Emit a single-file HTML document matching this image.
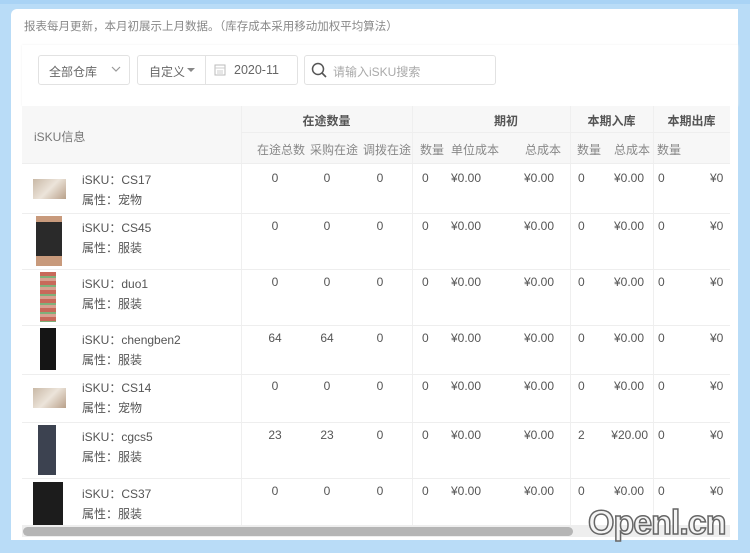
<!DOCTYPE html>
<html><head><meta charset="utf-8"><style>
*{margin:0;padding:0;box-sizing:border-box}
body{width:750px;height:553px;background:#b9dcf7;font-family:"Liberation Sans","Noto Sans CJK SC",sans-serif;font-size:12px;color:#555;position:relative;overflow:hidden}
.a{position:absolute;white-space:nowrap}
#panel{position:absolute;left:11px;top:9px;width:727px;height:531px;background:#fff;border-radius:6px 0 0 0;overflow:hidden}
.box{position:absolute;border:1px solid #e2e2e2;border-radius:3px;background:#fff}
.c{text-align:center}
.r{text-align:right}
.vl{position:absolute;width:1px;background:#efefef}
.hl{position:absolute;height:1px;background:#eeeeee}
</style></head><body>
<div id="panel"></div>
<div class="a" style="left:0;top:0;width:750px;height:4px;background:#a9d3f5"></div>
<div class="a" style="left:24px;top:18px;font-size:11.5px;color:#888">报表每月更新，本月初展示上月数据。（库存成本采用移动加权平均算法）</div>
<div class="a" style="left:22px;top:45px;width:716px;height:61px;background:#fff;box-shadow:0 0 2px #eee"></div>
<div class="box" style="left:38px;top:55px;width:92px;height:30px"></div>
<div class="a" style="left:49px;top:63px;color:#666">全部仓库</div>
<svg class="a" style="left:111px;top:66px" width="10" height="7"><path d="M1 1 L5 5 L9 1" fill="none" stroke="#999" stroke-width="1.2"/></svg>
<div class="box" style="left:137px;top:55px;width:161px;height:30px"></div>
<div class="a" style="left:205px;top:56px;width:1px;height:28px;background:#e2e2e2"></div>
<div class="a" style="left:149px;top:63px;color:#666">自定义</div>
<svg class="a" style="left:187px;top:68px" width="8" height="5"><path d="M0 0 L8 0 L4 4Z" fill="#888"/></svg>
<svg class="a" style="left:214px;top:63px" width="12" height="13"><rect x="1" y="2" width="10" height="10" fill="none" stroke="#bbb"/><path d="M1 5H11M3 8H9M3 10H9" stroke="#ccc"/></svg>
<div class="a" style="left:234px;top:63px;color:#666;font-size:12.5px">2020-11</div>
<div class="box" style="left:304px;top:55px;width:192px;height:30px"></div>
<svg class="a" style="left:311px;top:62px" width="16" height="16"><circle cx="7" cy="7" r="5.5" fill="none" stroke="#555" stroke-width="1.5"/><path d="M11 11 L15 15" stroke="#555" stroke-width="1.6"/></svg>
<div class="a" style="left:333px;top:63px;color:#aaa">请输入iSKU搜索</div>
<!-- table header -->
<div class="a" style="left:22px;top:106px;width:708px;height:57px;background:#f7f7f7"></div>
<div class="a" style="left:730px;top:106px;width:8px;height:419px;background:#fff"></div>
<div class="a" style="left:34px;top:128px;color:#777">iSKU信息</div>
<div class="a c" style="left:241px;top:112px;width:171px;font-weight:bold;color:#555">在途数量</div>
<div class="a c" style="left:412px;top:112px;width:158px;font-weight:bold;color:#555;padding-left:30px">期初</div>
<div class="a c" style="left:570px;top:112px;width:83px;font-weight:bold;color:#555">本期入库</div>
<div class="a c" style="left:653px;top:112px;width:77px;font-weight:bold;color:#555">本期出库</div>
<div class="a" style="left:257px;top:141px;color:#888">在途总数</div>
<div class="a" style="left:310px;top:141px;color:#888">采购在途</div>
<div class="a" style="left:363px;top:141px;color:#888">调拨在途</div>
<div class="a" style="left:420px;top:141px;color:#888">数量</div>
<div class="a" style="left:451px;top:141px;color:#888">单位成本</div>
<div class="a" style="left:525px;top:141px;color:#888">总成本</div>
<div class="a" style="left:577px;top:141px;color:#888">数量</div>
<div class="a" style="left:614px;top:141px;color:#888">总成本</div>
<div class="a" style="left:657px;top:141px;color:#888">数量</div>
<div class="vl" style="left:241px;top:106px;height:419px"></div>
<div class="vl" style="left:412px;top:106px;height:419px"></div>
<div class="vl" style="left:570px;top:106px;height:419px"></div>
<div class="vl" style="left:653px;top:106px;height:419px"></div>
<div class="hl" style="left:241px;top:132px;width:489px"></div>
<div class="hl" style="left:22px;top:163px;width:708px"></div>
<div class="hl" style="left:22px;top:213px;width:708px"></div>
<div class="hl" style="left:22px;top:269px;width:708px"></div>
<div class="hl" style="left:22px;top:325px;width:708px"></div>
<div class="hl" style="left:22px;top:374px;width:708px"></div>
<div class="hl" style="left:22px;top:422px;width:708px"></div>
<div class="hl" style="left:22px;top:478px;width:708px"></div>

<!-- images -->
<div class="a" style="left:33px;top:179px;width:33px;height:20px;background:linear-gradient(135deg,#c9b9a6,#ece4da 50%,#b8a089)"></div>
<div class="a" style="left:36px;top:216px;width:26px;height:50px;background:linear-gradient(#c89a7c 0 12%,#2a2a2a 12% 80%,#c89a7c 80%)"></div>
<div class="a" style="left:40px;top:272px;width:16px;height:50px;background:repeating-linear-gradient(#c8695a 0 4px,#7fb07a 4px 6px,#d8a090 6px 9px)"></div>
<div class="a" style="left:40px;top:328px;width:16px;height:42px;background:#151515"></div>
<div class="a" style="left:33px;top:388px;width:33px;height:20px;background:linear-gradient(135deg,#c9b9a6,#ece4da 50%,#b8a089)"></div>
<div class="a" style="left:38px;top:425px;width:18px;height:50px;background:#3c4250"></div>
<div class="a" style="left:33px;top:482px;width:30px;height:43px;background:#1c1c1c"></div>

<!-- rows -->
<div class="a" style="left:82px;top:170px;line-height:20px">iSKU：CS17<br>属性：宠物</div>
<div class="a" style="left:82px;top:218px;line-height:20px">iSKU：CS45<br>属性：服装</div>
<div class="a" style="left:82px;top:274px;line-height:20px">iSKU：duo1<br>属性：服装</div>
<div class="a" style="left:82px;top:330px;line-height:20px">iSKU：chengben2<br>属性：服装</div>
<div class="a" style="left:82px;top:378px;line-height:20px">iSKU：CS14<br>属性：宠物</div>
<div class="a" style="left:82px;top:427px;line-height:20px">iSKU：cgcs5<br>属性：服装</div>
<div class="a" style="left:82px;top:484px;line-height:20px">iSKU：CS37<br>属性：服装</div>

<!-- numbers -->
<div class="a" style="left:0;top:0">
<div class="a c" style="left:255px;top:171px;width:40px">0</div><div class="a c" style="left:307px;top:171px;width:40px">0</div><div class="a c" style="left:360px;top:171px;width:40px">0</div><div class="a" style="left:422px;top:171px">0</div><div class="a" style="left:451px;top:171px">¥0.00</div><div class="a r" style="left:504px;top:171px;width:50px">¥0.00</div><div class="a" style="left:578px;top:171px">0</div><div class="a r" style="left:594px;top:171px;width:50px">¥0.00</div><div class="a" style="left:658px;top:171px">0</div><div class="a" style="left:710px;top:171px">¥0</div>
<div class="a c" style="left:255px;top:219px;width:40px">0</div><div class="a c" style="left:307px;top:219px;width:40px">0</div><div class="a c" style="left:360px;top:219px;width:40px">0</div><div class="a" style="left:422px;top:219px">0</div><div class="a" style="left:451px;top:219px">¥0.00</div><div class="a r" style="left:504px;top:219px;width:50px">¥0.00</div><div class="a" style="left:578px;top:219px">0</div><div class="a r" style="left:594px;top:219px;width:50px">¥0.00</div><div class="a" style="left:658px;top:219px">0</div><div class="a" style="left:710px;top:219px">¥0</div>
<div class="a c" style="left:255px;top:275px;width:40px">0</div><div class="a c" style="left:307px;top:275px;width:40px">0</div><div class="a c" style="left:360px;top:275px;width:40px">0</div><div class="a" style="left:422px;top:275px">0</div><div class="a" style="left:451px;top:275px">¥0.00</div><div class="a r" style="left:504px;top:275px;width:50px">¥0.00</div><div class="a" style="left:578px;top:275px">0</div><div class="a r" style="left:594px;top:275px;width:50px">¥0.00</div><div class="a" style="left:658px;top:275px">0</div><div class="a" style="left:710px;top:275px">¥0</div>
<div class="a c" style="left:255px;top:331px;width:40px">64</div><div class="a c" style="left:307px;top:331px;width:40px">64</div><div class="a c" style="left:360px;top:331px;width:40px">0</div><div class="a" style="left:422px;top:331px">0</div><div class="a" style="left:451px;top:331px">¥0.00</div><div class="a r" style="left:504px;top:331px;width:50px">¥0.00</div><div class="a" style="left:578px;top:331px">0</div><div class="a r" style="left:594px;top:331px;width:50px">¥0.00</div><div class="a" style="left:658px;top:331px">0</div><div class="a" style="left:710px;top:331px">¥0</div>
<div class="a c" style="left:255px;top:379px;width:40px">0</div><div class="a c" style="left:307px;top:379px;width:40px">0</div><div class="a c" style="left:360px;top:379px;width:40px">0</div><div class="a" style="left:422px;top:379px">0</div><div class="a" style="left:451px;top:379px">¥0.00</div><div class="a r" style="left:504px;top:379px;width:50px">¥0.00</div><div class="a" style="left:578px;top:379px">0</div><div class="a r" style="left:594px;top:379px;width:50px">¥0.00</div><div class="a" style="left:658px;top:379px">0</div><div class="a" style="left:710px;top:379px">¥0</div>
<div class="a c" style="left:255px;top:428px;width:40px">23</div><div class="a c" style="left:307px;top:428px;width:40px">23</div><div class="a c" style="left:360px;top:428px;width:40px">0</div><div class="a" style="left:422px;top:428px">0</div><div class="a" style="left:451px;top:428px">¥0.00</div><div class="a r" style="left:504px;top:428px;width:50px">¥0.00</div><div class="a" style="left:578px;top:428px">2</div><div class="a r" style="left:594px;top:428px;width:54px">¥20.00</div><div class="a" style="left:658px;top:428px">0</div><div class="a" style="left:710px;top:428px">¥0</div>
<div class="a c" style="left:255px;top:484px;width:40px">0</div><div class="a c" style="left:307px;top:484px;width:40px">0</div><div class="a c" style="left:360px;top:484px;width:40px">0</div><div class="a" style="left:422px;top:484px">0</div><div class="a" style="left:451px;top:484px">¥0.00</div><div class="a r" style="left:504px;top:484px;width:50px">¥0.00</div><div class="a" style="left:578px;top:484px">0</div><div class="a r" style="left:594px;top:484px;width:50px">¥0.00</div><div class="a" style="left:658px;top:484px">0</div><div class="a" style="left:710px;top:484px">¥0</div>
</div>
<div class="a" style="left:730px;top:106px;width:8px;height:419px;background:#fff"></div>
<!-- scrollbar -->
<div class="a" style="left:22px;top:525px;width:708px;height:12px;background:#eee"></div>
<div class="a" style="left:23px;top:527px;width:550px;height:9px;background:#b5b5b5;border-radius:5px"></div>
<div class="a" style="left:588px;top:504px;font-size:34px;font-weight:bold;color:#f4f4f4;-webkit-text-stroke:1.5px #666;letter-spacing:-1px">Openl.cn</div>
</body></html>
